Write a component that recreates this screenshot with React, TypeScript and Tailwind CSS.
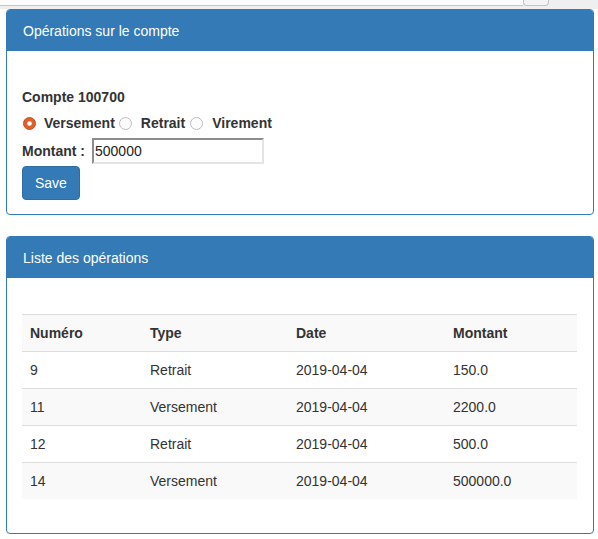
function Radio({ checked }: { checked?: boolean }) {
  return checked ? (
    <svg width="13" height="13" viewBox="0 0 13 13" className="shrink-0">
      <circle cx="6.5" cy="6.5" r="6" fill="#e0602c" stroke="#c24f20" />
      <circle cx="6.5" cy="6.5" r="2.3" fill="#ffffff" />
    </svg>
  ) : (
    <svg width="13" height="13" viewBox="0 0 13 13" className="shrink-0">
      <circle cx="6.5" cy="6.5" r="6" fill="#fcfcfc" stroke="#bcbcbc" />
    </svg>
  )
}

function Panel({ title, bodyClass, children }: { title: string; bodyClass: string; children: React.ReactNode }) {
  return (
    <div className="w-[588px] border border-[#337ab7] rounded-[4px] bg-white">
      <div className="h-[41px] bg-[#337ab7] rounded-t-[3px] pl-[16px] flex items-center text-white text-[14px]">
        {title}
      </div>
      <div className={bodyClass}>{children}</div>
    </div>
  )
}

const rows = [
  { num: "9", type: "Retrait", date: "2019-04-04", montant: "150.0" },
  { num: "11", type: "Versement", date: "2019-04-04", montant: "2200.0" },
  { num: "12", type: "Retrait", date: "2019-04-04", montant: "500.0" },
  { num: "14", type: "Versement", date: "2019-04-04", montant: "500000.0" },
]

export default function App() {
  return (
    <div className="min-h-screen w-full bg-white text-[#333] text-[14px] leading-[20px] font-['Liberation_Sans',Arial,sans-serif]">
      <div className="h-[9px] bg-[#efefef] flex items-start">
        <div className="w-[523px] h-[6px] bg-[#fcfcfc] border-b border-[#c6c6c6]" />
        <div className="w-[26px] h-[6px] bg-[#f4f4f4] border border-t-0 border-[#c2c2c2] rounded-b-[4px]" />
      </div>

      <div className="pl-[6px]">
        <Panel title="Opérations sur le compte" bodyClass="px-[15px] pt-[36px] pb-[14px]">
          <div className="font-bold">Compte 100700</div>
          <div className="mt-[6px] flex items-center font-bold">
            <span className="ml-[1px] mr-[8px] flex"><Radio checked /></span>
            <span>Versement</span>
            <span className="ml-[4px] mr-[9px] flex"><Radio /></span>
            <span>Retrait</span>
            <span className="ml-[5px] mr-[9px] flex"><Radio /></span>
            <span>Virement</span>
          </div>
          <div className="mt-[5px] flex items-center">
            <span className="font-bold">Montant :</span>
            <div className="ml-[7px] w-[172px] h-[26px] border-2 border-t-[#8d8d8d] border-l-[#8d8d8d] border-r-[#e4e4e4] border-b-[#e4e4e4] pl-[1px] flex items-center text-[#222]">
              500000
            </div>
          </div>
          <button className="mt-[2px] h-[34px] px-[12px] bg-[#337ab7] border border-[#2e6da4] rounded-[4px] text-white">
            Save
          </button>
        </Panel>

        <div className="mt-[21px]">
          <Panel title="Liste des opérations" bodyClass="px-[15px] pt-[36px] pb-[34px]">
            <table className="w-[555px] table-fixed border-collapse">
              <thead>
                <tr className="bg-[#f9f9f9] border-t border-[#dddddd]">
                  <th className="w-[120px] text-left px-[8px] py-[8px]">Numéro</th>
                  <th className="w-[146px] text-left px-[8px] py-[8px]">Type</th>
                  <th className="w-[157px] text-left px-[8px] py-[8px]">Date</th>
                  <th className="w-[132px] text-left px-[8px] py-[8px]">Montant</th>
                </tr>
              </thead>
              <tbody>
                {rows.map((r, i) => (
                  <tr key={r.num} className={(i % 2 === 1 ? "bg-[#f9f9f9] " : "bg-white ") + "border-t border-[#dddddd]"}>
                    <td className="px-[8px] py-[8px]">{r.num}</td>
                    <td className="px-[8px] py-[8px]">{r.type}</td>
                    <td className="px-[8px] py-[8px]">{r.date}</td>
                    <td className="px-[8px] py-[8px]">{r.montant}</td>
                  </tr>
                ))}
              </tbody>
            </table>
          </Panel>
        </div>
      </div>
    </div>
  )
}
